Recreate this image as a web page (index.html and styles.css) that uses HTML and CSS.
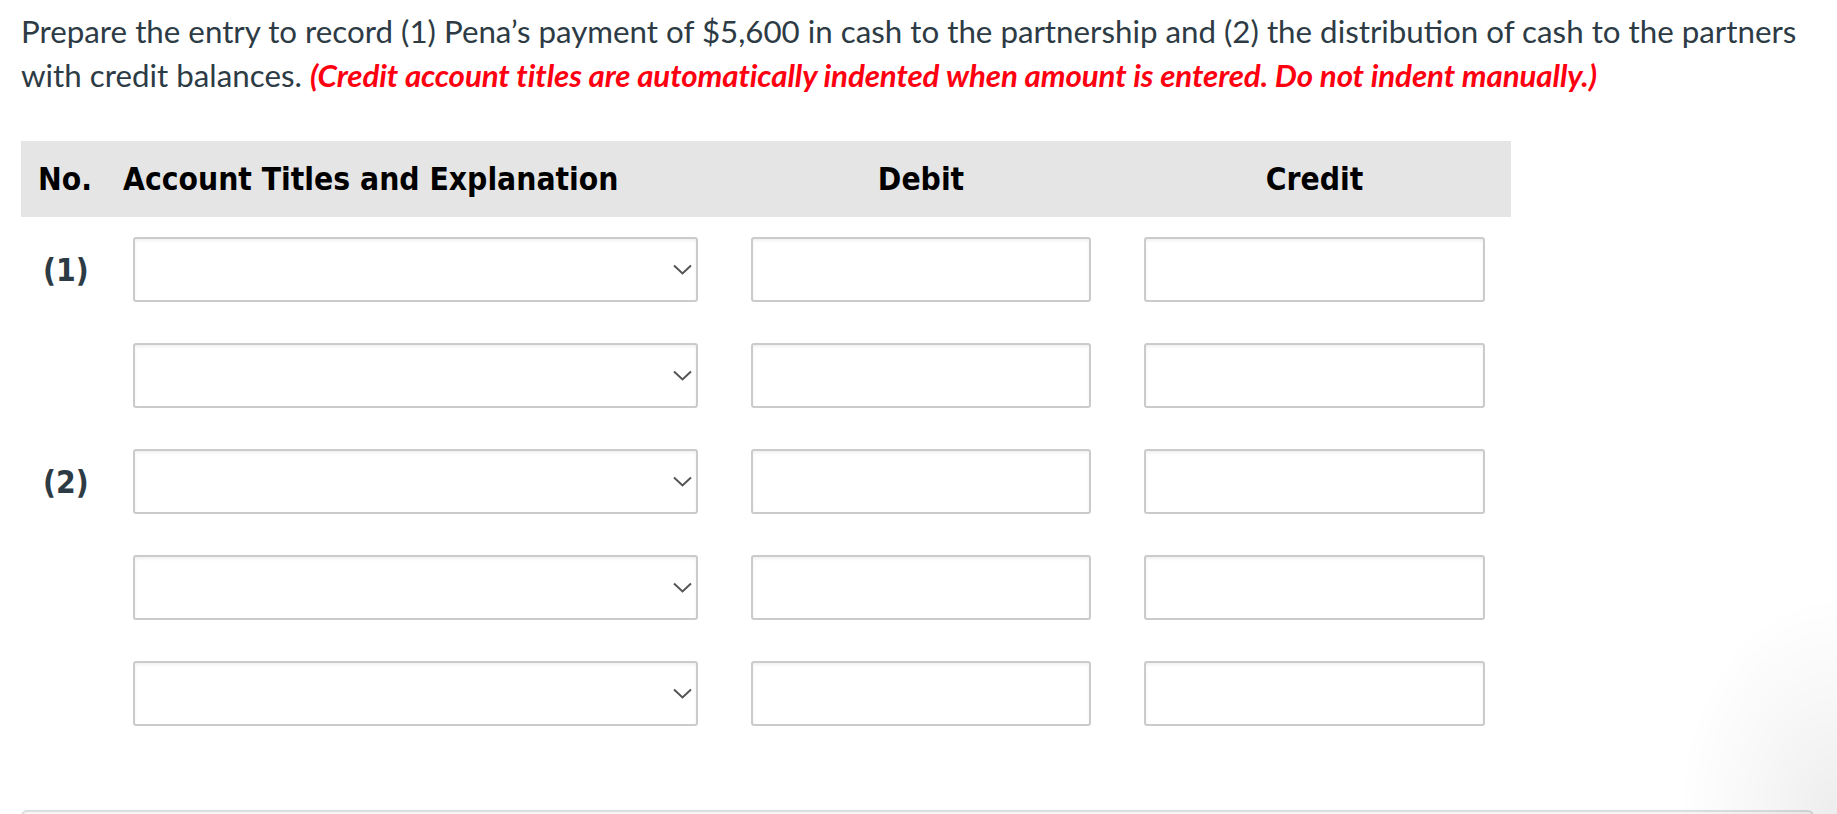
FILE: index.html
```html
<!DOCTYPE html>
<html lang="en">
<head>
<meta charset="utf-8">
<title>Journal entry</title>
<link rel="stylesheet" href="styles.css">
</head>
<body>
<div class="page">
  <p class="prompt">Prepare the entry to record (1) Pena’s payment of $5,600 in cash to the partnership and (2) the distribution of cash to the partners with credit balances. <em class="note">(Credit account titles are automatically indented when amount is entered. Do not indent manually.)</em></p>

  <div class="journal">
    <div class="head">
      <div class="h-no">No.</div>
      <div class="h-acct">Account Titles and Explanation</div>
      <div class="h-amt">Debit</div>
      <div class="h-amt">Credit</div>
    </div>

    <div class="rows">
      <div class="lbl">(1)</div>
      <div class="sel"><svg class="chev" width="19" height="11" viewBox="0 0 19 11"><path d="M1 1.5 L9.5 9.5 L18 1.5" fill="none" stroke="#555" stroke-width="2"/></svg></div>
      <input class="amt" type="text">
      <input class="amt" type="text">

      <div class="lbl"></div>
      <div class="sel"><svg class="chev" width="19" height="11" viewBox="0 0 19 11"><path d="M1 1.5 L9.5 9.5 L18 1.5" fill="none" stroke="#555" stroke-width="2"/></svg></div>
      <input class="amt" type="text">
      <input class="amt" type="text">

      <div class="lbl">(2)</div>
      <div class="sel"><svg class="chev" width="19" height="11" viewBox="0 0 19 11"><path d="M1 1.5 L9.5 9.5 L18 1.5" fill="none" stroke="#555" stroke-width="2"/></svg></div>
      <input class="amt" type="text">
      <input class="amt" type="text">

      <div class="lbl"></div>
      <div class="sel"><svg class="chev" width="19" height="11" viewBox="0 0 19 11"><path d="M1 1.5 L9.5 9.5 L18 1.5" fill="none" stroke="#555" stroke-width="2"/></svg></div>
      <input class="amt" type="text">
      <input class="amt" type="text">

      <div class="lbl"></div>
      <div class="sel"><svg class="chev" width="19" height="11" viewBox="0 0 19 11"><path d="M1 1.5 L9.5 9.5 L18 1.5" fill="none" stroke="#555" stroke-width="2"/></svg></div>
      <input class="amt" type="text">
      <input class="amt" type="text">
    </div>
  </div>

  <div class="next-box"></div>
</div>
<div class="curl"></div>
</body>
</html>
```

FILE: styles.css
```css
html, body {
  margin: 0;
  padding: 0;
  background: #ffffff;
  overflow: hidden;
}

.page {
  width: 1837px;
  height: 814px;
  padding: 9px 21px 0 21px;
  box-sizing: border-box;
}

.prompt {
  margin: 0;
  font-family: "Lato", "Liberation Sans", sans-serif;
  font-size: 31.3px;
  line-height: 44px;
  color: #2d3b45;
}

.note {
  color: #ff0010;
  font-weight: 700;
  font-style: italic;
  letter-spacing: -0.1px;
}

.journal {
  margin-top: 44px;
  width: 1490px;
}

.head {
  display: grid;
  grid-template-columns: 49px 575px 340px 341px;
  column-gap: 53px;
  align-items: center;
  height: 76px;
  background: #e5e5e5;
  font-family: "DejaVu Sans Condensed", "DejaVu Sans", sans-serif;
  font-stretch: condensed;
  font-weight: 700;
  font-size: 31.5px;
  color: #000;
  white-space: nowrap;
}

.h-no {
  padding-left: 17px;
}

.h-amt {
  text-align: center;
}

.rows {
  display: grid;
  grid-template-columns: 59px 565px 340px 341px;
  column-gap: 53px;
  row-gap: 41px;
  grid-auto-rows: 65px;
  align-items: center;
  margin-top: 20px;
}

.lbl {
  padding-left: 22px;
  font-family: "DejaVu Sans Condensed", "DejaVu Sans", sans-serif;
  font-stretch: condensed;
  font-weight: 700;
  font-size: 31.5px;
  color: #2d3b45;
  white-space: nowrap;
}

.sel, .amt {
  height: 65px;
  box-sizing: border-box;
  border: 2px solid #cbcbcb;
  border-radius: 3px;
  background: #fff;
  box-shadow: inset 0 2px 3px rgba(0, 0, 0, 0.06);
  margin: 0;
}

.sel {
  display: flex;
  align-items: center;
  justify-content: flex-end;
  padding-right: 4px;
}

.amt {
  width: 100%;
  padding: 0 10px;
  font-size: 24px;
  outline: none;
}

.next-box {
  margin-top: 84px;
  width: 1793px;
  height: 40px;
  box-sizing: border-box;
  border: 2px solid #dedede;
  border-radius: 6px;
  background: #f6f6f6;
}

.curl {
  position: fixed;
  right: 0;
  bottom: 0;
  width: 160px;
  height: 220px;
  background: radial-gradient(ellipse at 100% 100%, rgba(0,0,0,0.07) 0%, rgba(0,0,0,0.03) 35%, rgba(0,0,0,0) 70%);
  pointer-events: none;
}
```
